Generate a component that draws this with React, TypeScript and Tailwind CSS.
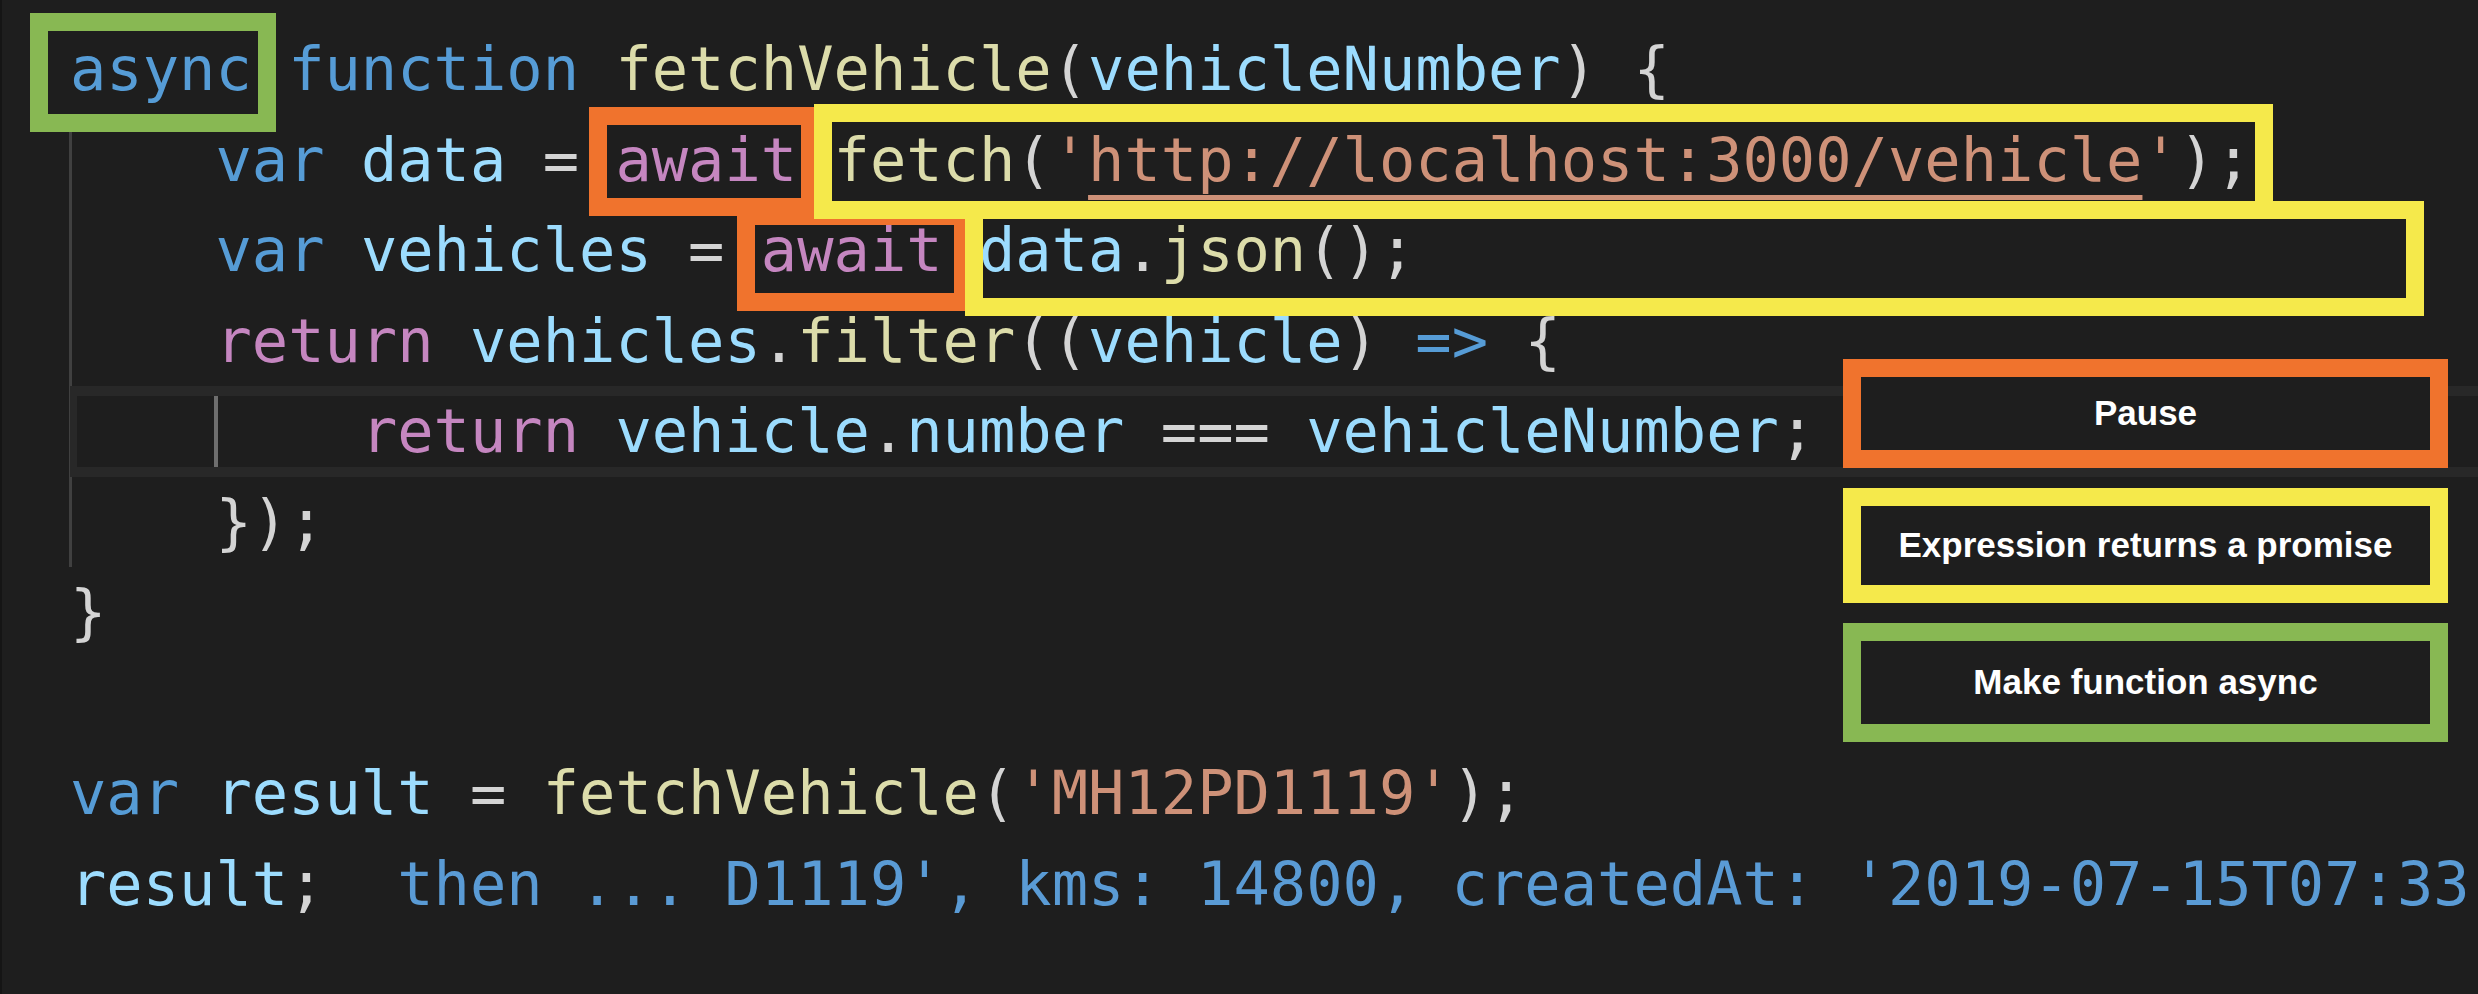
const kw = "text-[#569cd6]";
const ctl = "text-[#c586c0]";
const fn = "text-[#dcdcaa]";
const vr = "text-[#9cdcfe]";
const st = "text-[#ce9178]";
const pn = "text-[#d4d4d4]";

function Line({ children, current }: { children?: React.ReactNode; current?: boolean }) {
  return (
    <div className="relative h-[90.5px] whitespace-pre">
      {current && (
        <div className="absolute inset-y-0 left-0 -right-[10px] border-y-[10px] border-l-[7px] border-[#282828]" />
      )}
      <span className="relative">{children}</span>
    </div>
  );
}

function Mark({ color, className }: { color: string; className: string }) {
  return <div className={`absolute border-[18px] ${color} ${className}`} />;
}

function Legend({ color, height, label }: { color: string; height: string; label: string }) {
  return (
    <div
      className={`flex items-center justify-center border-[18px] bg-[#1e1e1e] ${color} ${height} font-['Liberation_Sans',Arial,sans-serif] text-[35px] font-bold text-white`}
    >
      {label}
    </div>
  );
}

export default function App() {
  return (
    <div className="relative h-[994px] w-[2478px] overflow-hidden bg-[#1e1e1e] shadow-[inset_2px_0_0_#151515]">
      {/* indent guides */}
      <div className="absolute left-[69px] top-[114px] h-[453px] w-[3px] bg-[#404040]" />
      <div className="absolute left-[214px] top-[387px] h-[90px] w-[4px] bg-[#6e6e6e]" />

      <div className="pl-[70px] pt-[24px] font-['DejaVu_Sans_Mono',monospace] text-[60.4px] leading-[90.5px]">
        <Line>
          <span className={kw}>async</span> <span className={kw}>function</span>{" "}
          <span className={fn}>fetchVehicle</span>
          <span className={pn}>(</span>
          <span className={vr}>vehicleNumber</span>
          <span className={pn}>) {"{"}</span>
        </Line>
        <Line>
          {"    "}
          <span className={kw}>var</span> <span className={vr}>data</span> <span className={pn}>=</span>{" "}
          <span className={ctl}>await</span> <span className={fn}>fetch</span>
          <span className={pn}>(</span>
          <span className={st}>'</span>
          <span className={`${st} underline decoration-[#ce9178] decoration-[5px] underline-offset-[14px]`}>
            http://localhost:3000/vehicle
          </span>
          <span className={st}>'</span>
          <span className={pn}>);</span>
        </Line>
        <Line>
          {"    "}
          <span className={kw}>var</span> <span className={vr}>vehicles</span> <span className={pn}>=</span>{" "}
          <span className={ctl}>await</span> <span className={vr}>data</span>
          <span className={pn}>.</span>
          <span className={fn}>json</span>
          <span className={pn}>();</span>
        </Line>
        <Line>
          {"    "}
          <span className={ctl}>return</span> <span className={vr}>vehicles</span>
          <span className={pn}>.</span>
          <span className={fn}>filter</span>
          <span className={pn}>((</span>
          <span className={vr}>vehicle</span>
          <span className={pn}>)</span> <span className={kw}>=&gt;</span> <span className={pn}>{"{"}</span>
        </Line>
        <Line current>
          {"        "}
          <span className={ctl}>return</span> <span className={vr}>vehicle</span>
          <span className={pn}>.</span>
          <span className={vr}>number</span> <span className={pn}>===</span>{" "}
          <span className={vr}>vehicleNumber</span>
          <span className={pn}>;</span>
        </Line>
        <Line>
          {"    "}
          <span className={pn}>{"});"}</span>
        </Line>
        <Line>
          <span className={pn}>{"}"}</span>
        </Line>
        <Line> </Line>
        <Line>
          <span className={kw}>var</span> <span className={vr}>result</span> <span className={pn}>=</span>{" "}
          <span className={fn}>fetchVehicle</span>
          <span className={pn}>(</span>
          <span className={st}>'MH12PD1119'</span>
          <span className={pn}>);</span>
        </Line>
        <Line>
          <span className={vr}>result</span>
          <span className={pn}>;</span>
          {"  "}
          <span className="text-[#5a9bd5]">then ... D1119', kms: 14800, createdAt: '2019-07-15T07:33</span>
        </Line>
      </div>

      {/* annotation boxes over the code */}
      <Mark color="border-[#88b853]" className="left-[30px] top-[13px] h-[119px] w-[246px]" />
      <Mark color="border-[#f0732d]" className="left-[589px] top-[107px] h-[109px] w-[230px]" />
      <Mark color="border-[#f0732d]" className="left-[737px] top-[207px] h-[104px] w-[235px]" />
      <Mark color="border-[#f5e94b]" className="left-[814px] top-[104px] h-[115px] w-[1459px]" />
      <Mark color="border-[#f5e94b]" className="left-[965px] top-[201px] h-[115px] w-[1459px]" />

      {/* legend */}
      <div className="absolute left-[1843px] top-[359px] flex w-[605px] flex-col gap-[20px]">
        <Legend color="border-[#f0732d]" height="h-[109px]" label="Pause" />
        <Legend color="border-[#f5e94b]" height="h-[115px]" label="Expression returns a promise" />
        <Legend color="border-[#88b853]" height="h-[119px]" label="Make function async" />
      </div>
    </div>
  );
}
